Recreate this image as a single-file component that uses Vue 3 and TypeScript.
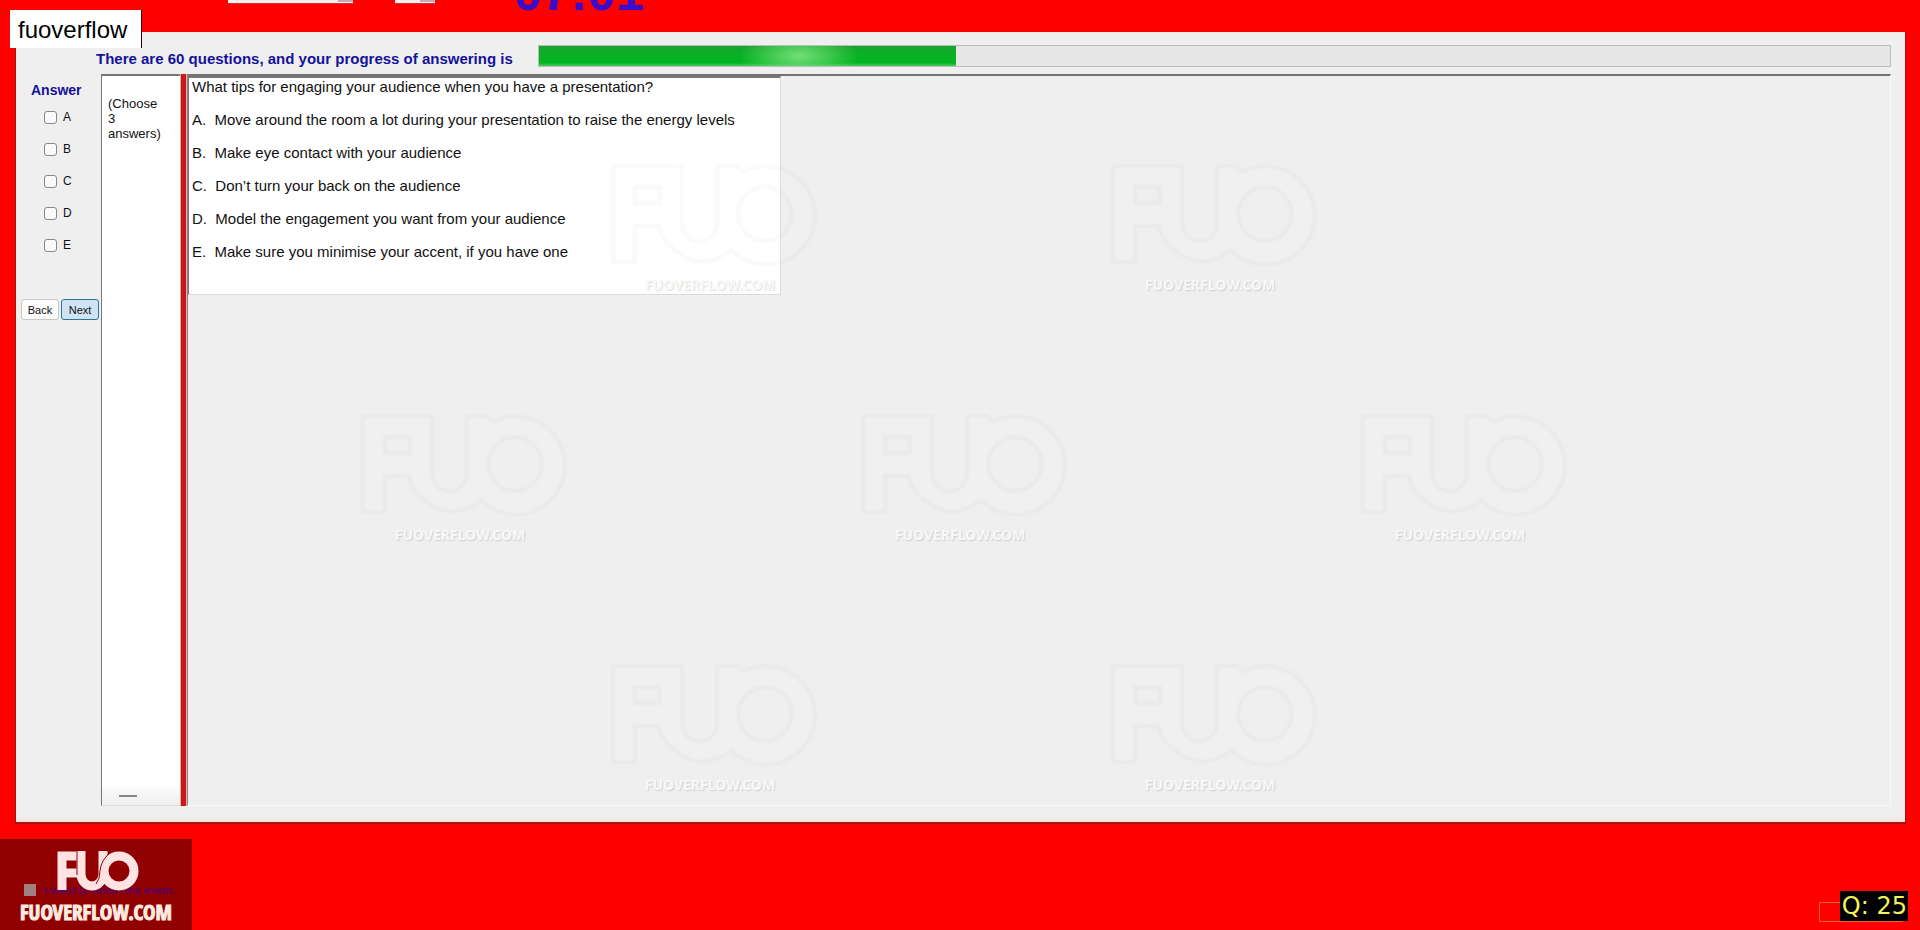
<script setup lang="ts">
import { ref } from 'vue'

const options = [
  { key: 'A', text: 'Move around the room a lot during your presentation to raise the energy levels' },
  { key: 'B', text: 'Make eye contact with your audience' },
  { key: 'C', text: 'Don’t turn your back on the audience' },
  { key: 'D', text: 'Model the engagement you want from your audience' },
  { key: 'E', text: 'Make sure you minimise your accent, if you have one' },
]
const chosen = ref<string[]>([])
const marks = [
  { x: 600, y: 150 },
  { x: 1100, y: 150 },
  { x: 350, y: 400 },
  { x: 850, y: 400 },
  { x: 1350, y: 400 },
  { x: 600, y: 650 },
  { x: 1100, y: 650 },
]
</script>

<template>
  <div class="screen">
    <header class="top">
      <select class="pick wide" aria-label="Font"></select>
      <select class="pick small" aria-label="Size"></select>
      <div class="timer">07:01</div>
    </header>
    <div class="tag">fuoverflow</div>

    <main class="window">
      <div class="status">
        <span id="progress-label" class="status-text">There are 60 questions, and your progress of answering is</span>
        <div class="track" role="progressbar" aria-labelledby="progress-label" aria-valuenow="31">
          <div class="fill"></div>
        </div>
      </div>
      <div class="body">
        <aside class="answers">
          <h2>Answer</h2>
          <label v-for="o in options" :key="o.key" class="check">
            <input v-model="chosen" type="checkbox" :value="o.key" />{{ o.key }}
          </label>
          <div class="buttons">
            <button type="button">Back</button>
            <button type="button" class="next">Next</button>
          </div>
        </aside>
        <section class="hint">
          <p>(Choose<br />3<br />answers)</p>
          <div class="grip"><i></i></div>
        </section>
        <div class="splitter"></div>
        <section class="stage">
          <div class="question">
            <p>What tips for engaging your audience when you have a presentation?</p>
            <p v-for="o in options" :key="o.key">{{ o.key }}.&nbsp; {{ o.text }}</p>
          </div>
        </section>
      </div>
    </main>

    <footer class="foot">
      <div class="brand">
        <label class="finish"><input type="checkbox" disabled /><span>I want to finish the exam.</span></label>
        <svg class="brand-art" viewBox="0 0 192 91" aria-hidden="true">
          <g fill="none" stroke="#ffe3e3" stroke-width="9">
            <path d="M62 51V17H77M62 34H77" />
            <path d="M81 12V35a11 12 0 0 0 22 0V12" />
            <circle cx="119" cy="32" r="15" />
          </g>
          <path d="M77 12V36M110 14q-9 7 -10 18q0 8 -4 13" fill="none" stroke="#900000" />
          <text x="96" y="81" text-anchor="middle">FUOVERFLOW.COM</text>
        </svg>
      </div>
      <div class="counter"><span>Q: 25</span></div>
    </footer>

    <svg v-for="(m, i) in marks" :key="i" class="mark" :style="{ left: m.x + 'px', top: m.y + 'px' }" viewBox="0 0 230 150" aria-hidden="true">
      <path class="edge" fill-rule="evenodd" d="M13 16H82V74a17 17 0 0 0 35 0V16H137L143 22A49 49 0 1 1 131 100Q98 126 66 92Q60 84 59 76H35V112H13ZM35 37H60V53H35ZM138 64a27 27 0 1 0 54 0a27 27 0 1 0 -54 0" />
      <text x="110" y="140" text-anchor="middle">FUOVERFLOW.COM</text>
    </svg>
  </div>
</template>

<style>
body { margin: 0; background: #fe0000; }
</style>

<style scoped>
* { box-sizing: border-box; }
.screen { position: relative; display: flex; flex-direction: column; min-height: 100vh; overflow: hidden; background: #fe0000; font-family: "Liberation Sans", Arial, sans-serif; color: #111; }
.top { display: flex; align-items: flex-start; height: 32px; padding-left: 228px; overflow: hidden; }
.pick { appearance: none; height: 4px; margin: 0; padding: 0; border: 0; border-bottom: 1px solid #c33; border-radius: 0; background: linear-gradient(#c9a9b9, #c9a9b9) right top / 15px 2px no-repeat #fbeeee; }
.wide { width: 125px; }
.small { width: 40px; margin-left: 42px; }
.timer { margin: -33px 0 0 79px; font-size: 51px; line-height: 51px; font-weight: 700; color: #3a0ccb; }
.tag { position: absolute; left: 10px; top: 10px; z-index: 3; padding: 2px 14px 0 8px; border-right: 1px solid #300; background: #fff; font-size: 24px; line-height: 36px; color: #000; }
.window { flex: 1; display: flex; flex-direction: column; margin: 0 15px 0 16px; padding: 11px 12px 13px 0; border: 2px solid #fbe9e4; border-left-width: 1px; border-bottom: 3px solid #ffe0dd; background: #efefef; box-shadow: 0 1px 1px 1px #a31616; }
.status { display: flex; align-items: flex-start; height: 29px; padding-left: 79px; }
.status-text { width: 442px; padding-top: 6px; font-size: 15px; line-height: 16px; font-weight: 700; color: #14129a; white-space: nowrap; }
.track { flex: 1; height: 22px; border: 1px solid #bcbcbc; background: #e6e6e6; }
.fill { width: 417px; max-width: 100%; height: 20px; background: radial-gradient(ellipse 60px 24px at 260px 10px, #72df78, transparent), linear-gradient(#16a52c, #04b322 60%, #04b322 85%, #4ccc5c); }
.body { flex: 1; display: flex; }
.answers { width: 84px; padding-left: 4px; }
.answers h2 { margin: 8px 0 11px 10px; font-size: 14px; line-height: 16px; color: #14129a; }
.check { display: flex; align-items: center; gap: 6px; height: 16px; margin: 0 0 16px 23px; font-size: 12px; line-height: 16px; }
.check input { appearance: none; width: 13px; height: 13px; margin: 0; border: 1px solid #888; border-radius: 3px; background: #fafafa; }
.check input:checked { background: #1b6fc2; }
.buttons { display: flex; gap: 2px; margin-top: 46px; }
.buttons button { width: 38px; height: 21px; padding: 0; border: 1px solid #c8c8c8; border-radius: 3px; background: #fdfdfd; font: 11px/16px "Liberation Sans", Arial, sans-serif; color: #111; }
.buttons .next { border-color: #2f7693; background: #cfe4f2; }
.hint { display: flex; flex-direction: column; justify-content: space-between; width: 79px; border: 1px solid #777; border-top-width: 2px; border-right: 0; border-bottom: 1px solid #ddd; background: #fff; }
.hint p { margin: 20px 0 0 6px; font-size: 13px; line-height: 15px; }
.grip { display: flex; align-items: center; height: 18px; padding-left: 17px; background: linear-gradient(#fbfbfb, #efefef); }
.grip i { width: 18px; height: 2px; background: #888; }
.splitter { width: 7px; border-right: 1px solid #f3aaa5; border-left: 1px solid #f3aaa5; background: #c51a1a; }
.stage { flex: 1; border: 1px solid #fafafa; border-top: 2px solid #737373; border-left: 1px solid #888; }
.question { width: 593px; max-width: 100%; height: 219px; padding-left: 3px; border: 1px solid #ddd; border-top: 2px solid #777; border-left: 1px solid #777; background: #fff; font-size: 15px; }
.question p { height: 33px; margin: 0; line-height: 18px; white-space: nowrap; }
.foot { display: flex; justify-content: space-between; align-items: flex-end; height: 108px; }
.brand { position: relative; width: 192px; height: 91px; background: #900000; }
.brand-art { position: absolute; inset: 0; width: 192px; height: 91px; }
.brand-art text { font: 700 21px "Liberation Sans Narrow", "Open Sans Condensed", sans-serif; fill: #ffeae0; stroke: #ffeae0; stroke-width: 1px; }
.finish { display: flex; align-items: center; gap: 8px; padding: 44px 0 0 24px; font-size: 11px; line-height: 14px; font-weight: 700; color: #5a0060; white-space: nowrap; }
.finish input { appearance: none; width: 12px; height: 12px; margin: 0; background: #a08080; }
.counter { display: flex; justify-content: flex-end; align-items: flex-end; height: 20px; width: 84px; margin: 0 17px 8px 0; border: 1px solid #e56a2a; }
.counter span { flex: none; margin: 0 -6px 0 0; padding: 0 1px 0 2px; background: #000; color: #f2f25a; font: 24px/30px "DejaVu Sans", sans-serif; white-space: pre; }
.mark { position: absolute; width: 230px; height: 150px; pointer-events: none; }
.edge { fill: #ffffff18; stroke: #00000006; stroke-width: 4px; filter: blur(1px); }
.mark text { font: 700 14px "Noto Sans", sans-serif; fill: #f8f8f8; text-shadow: 1px 1px 1px #00000020; }
</style>
